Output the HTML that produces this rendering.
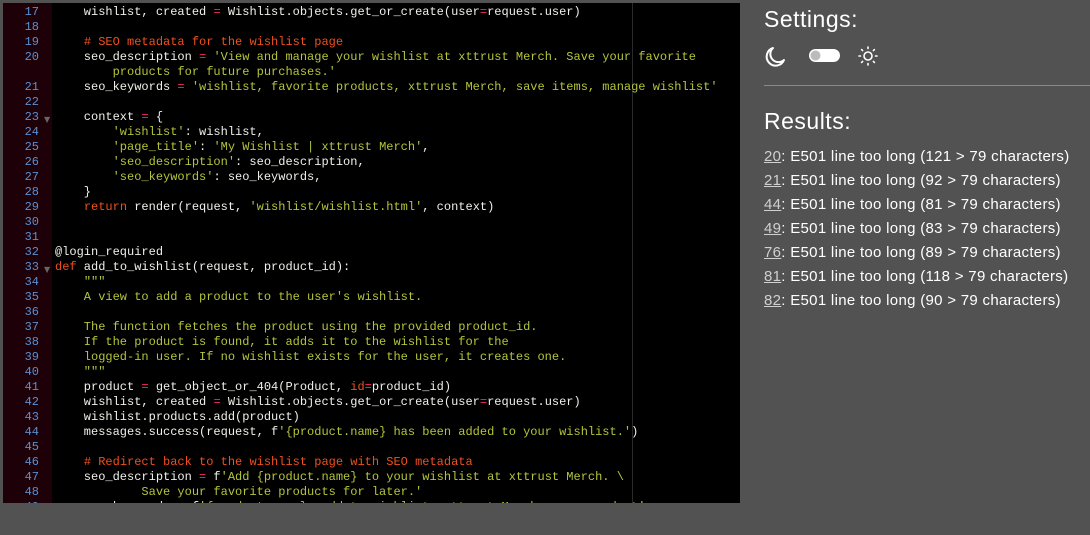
<!DOCTYPE html>
<html><head><meta charset="utf-8"><style>
html,body{margin:0;padding:0;width:1090px;height:535px;background:#525252;overflow:hidden}
#ed{position:absolute;left:3px;top:3px;width:737px;height:500px;background:#000;overflow:hidden}
#gut{position:absolute;left:0;top:0;width:49px;height:500px;background:#1e0008}
#ml{position:absolute;left:629px;top:0;width:1px;height:500px;background:#2a2a2a}
pre{margin:0;font-family:"Liberation Mono",monospace;font-size:12px;line-height:15px;position:absolute;top:2px;white-space:pre}
#nums{left:0;width:36px;text-align:right;color:#5b8fd0}
#code{left:52px;color:#f0f0ea}
.s{color:#b5c43a}.c{color:#f04f1e}.k{color:#f04f1e}.o{color:#f92672}
.f{position:absolute;left:41px;color:#666;font-size:8px;font-family:"DejaVu Sans",sans-serif}
#side{position:absolute;left:764px;top:0;color:#fff;font-family:"Liberation Sans",sans-serif}
h2{font-weight:normal;font-size:23px;margin:0;position:absolute;left:0;white-space:nowrap;letter-spacing:0.5px}
#hr{position:absolute;left:764px;top:85px;width:326px;height:1px;background:#8a8a8a}
.r{position:absolute;left:0;font-size:15px;white-space:nowrap;color:#fff;letter-spacing:0.3px}
.r u{color:#d0d0d0}
</style></head><body>
<div id="ed">
<div id="gut"></div>
<div id="ml"></div>
<pre id="nums">17
18
19
20

21
22
23
24
25
26
27
28
29
30
31
32
33
34
35
36
37
38
39
40
41
42
43
44
45
46
47
48
49</pre>
<span class="f" style="top:112px">▼</span>
<span class="f" style="top:262px">▼</span>
<pre id="code">    wishlist, created <span class="o">=</span> Wishlist.objects.get_or_create(user<span class="o">=</span>request.user)

    <span class="c"># SEO metadata for the wishlist page</span>
    seo_description <span class="o">=</span> <span class="s">'View and manage your wishlist at xttrust Merch. Save your favorite</span>
<span class="s">        products for future purchases.'</span>
    seo_keywords <span class="o">=</span> <span class="s">'wishlist, favorite products, xttrust Merch, save items, manage wishlist'</span>

    context <span class="o">=</span> {
        <span class="s">'wishlist'</span>: wishlist,
        <span class="s">'page_title'</span>: <span class="s">'My Wishlist | xttrust Merch'</span>,
        <span class="s">'seo_description'</span>: seo_description,
        <span class="s">'seo_keywords'</span>: seo_keywords,
    }
    <span class="k">return</span> render(request, <span class="s">'wishlist/wishlist.html'</span>, context)


@login_required
<span class="k">def</span> add_to_wishlist(request, product_id):
    <span class="s">"""</span>
<span class="s">    A view to add a product to the user's wishlist.</span>

<span class="s">    The function fetches the product using the provided product_id.</span>
<span class="s">    If the product is found, it adds it to the wishlist for the</span>
<span class="s">    logged-in user. If no wishlist exists for the user, it creates one.</span>
<span class="s">    """</span>
    product <span class="o">=</span> get_object_or_404(Product, <span class="k">id</span><span class="o">=</span>product_id)
    wishlist, created <span class="o">=</span> Wishlist.objects.get_or_create(user<span class="o">=</span>request.user)
    wishlist.products.add(product)
    messages.success(request, f<span class="s">'{product.name} has been added to your wishlist.'</span>)

    <span class="c"># Redirect back to the wishlist page with SEO metadata</span>
    seo_description <span class="o">=</span> f<span class="s">'Add {product.name} to your wishlist at xttrust Merch. \</span>
<span class="s">            Save your favorite products for later.'</span>
    seo_keywords <span class="o">=</span> f<span class="s">'{product.name}, add to wishlist, xttrust Merch, save product'</span></pre>
</div>
<div id="side">
<h2 style="top:6px">Settings:</h2>
<svg style="position:absolute;left:0;top:44px" width="120" height="24" viewBox="0 0 120 24">
<path d="M13 4 A9 9 0 1 0 24 16 A8 8 0 0 1 13 4 Z" fill="none" stroke="#fff" stroke-width="2" stroke-linejoin="round" transform="translate(-4,0)"/>
<rect x="45" y="5" width="31" height="13" rx="6.5" fill="#fff"/>
<circle cx="51.5" cy="11.5" r="5" fill="#bbb"/>
<circle cx="104" cy="12" r="4" fill="none" stroke="#fff" stroke-width="1.6"/>
<g stroke="#fff" stroke-width="1.6" stroke-linecap="round">
<line x1="104" y1="3" x2="104" y2="4.5"/><line x1="104" y1="19.5" x2="104" y2="21"/>
<line x1="95" y1="12" x2="96.5" y2="12"/><line x1="111.5" y1="12" x2="113" y2="12"/>
<line x1="97.6" y1="5.6" x2="98.6" y2="6.6"/><line x1="109.4" y1="17.4" x2="110.4" y2="18.4"/>
<line x1="97.6" y1="18.4" x2="98.6" y2="17.4"/><line x1="109.4" y1="6.6" x2="110.4" y2="5.6"/>
</g></svg>
<h2 style="top:108px">Results:</h2>
<div class="r" style="top:148px"><u>20</u>: E501 line too long (121 &gt; 79 characters)</div>
<div class="r" style="top:172px"><u>21</u>: E501 line too long (92 &gt; 79 characters)</div>
<div class="r" style="top:196px"><u>44</u>: E501 line too long (81 &gt; 79 characters)</div>
<div class="r" style="top:220px"><u>49</u>: E501 line too long (83 &gt; 79 characters)</div>
<div class="r" style="top:244px"><u>76</u>: E501 line too long (89 &gt; 79 characters)</div>
<div class="r" style="top:268px"><u>81</u>: E501 line too long (118 &gt; 79 characters)</div>
<div class="r" style="top:292px"><u>82</u>: E501 line too long (90 &gt; 79 characters)</div>
</div>
<div id="hr"></div>
</body></html>
